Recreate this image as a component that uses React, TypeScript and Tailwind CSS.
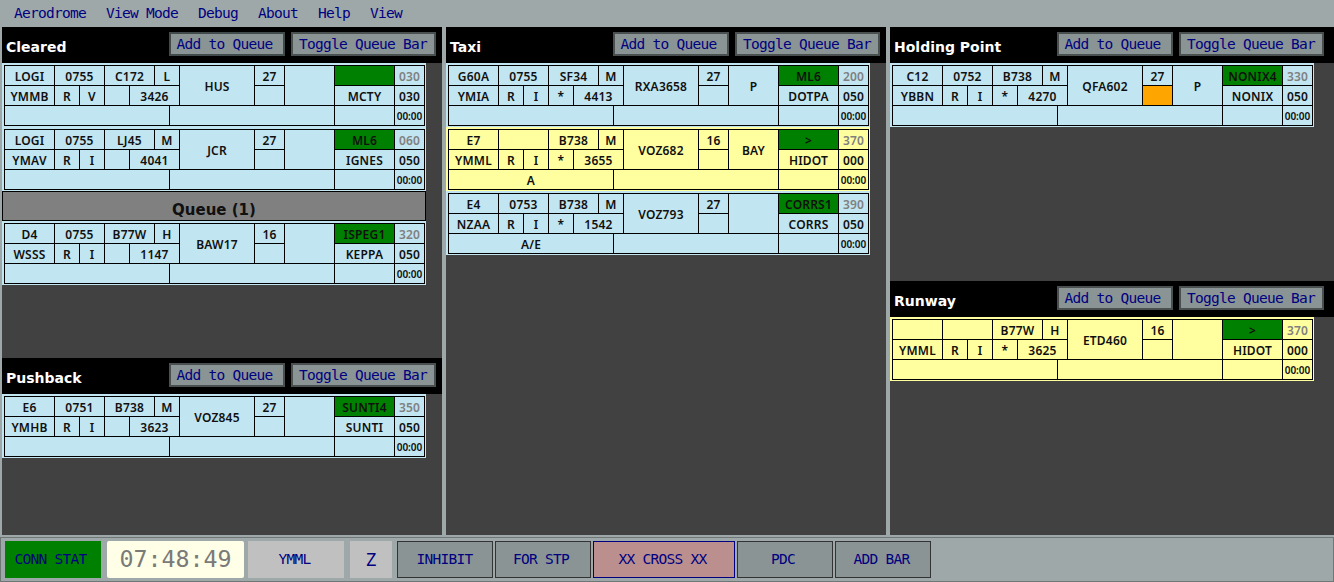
import React from 'react';

const MONO = "font-['DejaVu_Sans_Mono',monospace] text-[14.5px] tracking-[-0.73px]";

interface StripData {
  bay?: string;
  time?: string;
  type: string;
  wake: string;
  call: string;
  rwy: string;
  stand?: string;
  sid?: string;
  rfl: string;
  dep: string;
  flight: string;
  star?: string;
  squawk: string;
  hold?: boolean;
  fix: string;
  cfl: string;
  route?: string;
  yellow?: boolean;
}

const CELL = 'flex items-center justify-center border-r border-b border-black pt-[2px] whitespace-nowrap overflow-hidden';

function Strip({ s }: { s: StripData }) {
  return (
    <div className={`w-[424px] pt-[2px] pl-[2px] h-[64px] ${s.yellow ? 'bg-[#ffff9f]' : 'bg-[#c1e5f1]'}`}>
      <div className="grid w-[421px] grid-cols-[50px_25px_25px_25px_25px_15px_10px_75px_30px_50px_60px_30px] grid-rows-[20px_20px_20px] border-l border-t border-black font-['Noto_Sans',sans-serif] text-[12px] font-semibold tracking-[0.2px] text-[#101010]">
        <div className={CELL}>{s.bay}</div>
        <div className={`${CELL} col-span-2`}>{s.time}</div>
        <div className={`${CELL} col-span-2`}>{s.type}</div>
        <div className={`${CELL} col-span-2`}>{s.wake}</div>
        <div className={`${CELL} row-span-2`}>{s.call}</div>
        <div className={CELL}>{s.rwy}</div>
        <div className={`${CELL} row-span-2`}>{s.stand}</div>
        <div className={`${CELL} bg-[#008000]`}>{s.sid}</div>
        <div className={`${CELL} text-[#808080]`}>{s.rfl}</div>

        <div className={CELL}>{s.dep}</div>
        <div className={CELL}>R</div>
        <div className={CELL}>{s.flight}</div>
        <div className={CELL}>{s.star}</div>
        <div className={`${CELL} col-span-3`}>{s.squawk}</div>
        <div className={`${CELL} ${s.hold ? 'bg-[#ffa500]' : ''}`} />
        <div className={CELL}>{s.fix}</div>
        <div className={CELL}>{s.cfl}</div>

        <div className={`${CELL} col-span-6`}>{s.route}</div>
        <div className={`${CELL} col-span-4`} />
        <div className={CELL} />
        <div className={`${CELL} text-[10px] tracking-normal`}>00:00</div>
      </div>
    </div>
  );
}

function Header({ title, focused, extra }: { title: string; focused?: boolean; extra?: boolean }) {
  const btn = `h-[24px] border-2 bg-[#8a9494] pb-[2px] text-[#000080] ${MONO}`;
  return (
    <div className={`flex h-[36px] items-center bg-black ${extra ? 'pr-[10px]' : 'pr-[6px]'}`}>
      <span className="pl-[4px] pt-[4px] font-['DejaVu_Sans',sans-serif] text-[14px] font-bold text-white">{title}</span>
      <div className="ml-auto flex gap-[6px] pb-[3px]">
        <button className={`${btn} w-[116px] pr-[5px] ${focused ? 'border-[#404a4a]' : 'border-[#4a4f4f]'}`}>Add to Queue</button>
        <button className={`${btn} w-[145px] pr-[1px] border-[#4a4f4f]`}>Toggle Queue Bar</button>
      </div>
    </div>
  );
}

const CLEARED: StripData[] = [
  { bay: 'LOGI', time: '0755', type: 'C172', wake: 'L', call: 'HUS', rwy: '27', rfl: '030', dep: 'YMMB', flight: 'V', squawk: '3426', fix: 'MCTY', cfl: '030' },
  { bay: 'LOGI', time: '0755', type: 'LJ45', wake: 'M', call: 'JCR', rwy: '27', sid: 'ML6', rfl: '060', dep: 'YMAV', flight: 'I', squawk: '4041', fix: 'IGNES', cfl: '050' },
];
const QUEUE: StripData[] = [
  { bay: 'D4', time: '0755', type: 'B77W', wake: 'H', call: 'BAW17', rwy: '16', sid: 'ISPEG1', rfl: '320', dep: 'WSSS', flight: 'I', squawk: '1147', fix: 'KEPPA', cfl: '050' },
];
const PUSHBACK: StripData[] = [
  { bay: 'E6', time: '0751', type: 'B738', wake: 'M', call: 'VOZ845', rwy: '27', sid: 'SUNTI4', rfl: '350', dep: 'YMHB', flight: 'I', squawk: '3623', fix: 'SUNTI', cfl: '050' },
];
const TAXI: StripData[] = [
  { bay: 'G60A', time: '0755', type: 'SF34', wake: 'M', call: 'RXA3658', rwy: '27', stand: 'P', sid: 'ML6', rfl: '200', dep: 'YMIA', flight: 'I', star: '*', squawk: '4413', fix: 'DOTPA', cfl: '050' },
  { bay: 'E7', type: 'B738', wake: 'M', call: 'VOZ682', rwy: '16', stand: 'BAY', sid: '>', rfl: '370', dep: 'YMML', flight: 'I', star: '*', squawk: '3655', fix: 'HIDOT', cfl: '000', route: 'A', yellow: true },
  { bay: 'E4', time: '0753', type: 'B738', wake: 'M', call: 'VOZ793', rwy: '27', sid: 'CORRS1', rfl: '390', dep: 'NZAA', flight: 'I', star: '*', squawk: '1542', fix: 'CORRS', cfl: '050', route: 'A/E' },
];
const HOLDING: StripData[] = [
  { bay: 'C12', time: '0752', type: 'B738', wake: 'M', call: 'QFA602', rwy: '27', stand: 'P', sid: 'NONIX4', rfl: '330', dep: 'YBBN', flight: 'I', star: '*', squawk: '4270', fix: 'NONIX', cfl: '050', hold: true },
];
const RUNWAY: StripData[] = [
  { type: 'B77W', wake: 'H', call: 'ETD460', rwy: '16', sid: '>', rfl: '370', dep: 'YMML', flight: 'I', star: '*', squawk: '3625', fix: 'HIDOT', cfl: '000', yellow: true },
];

const FOOT_BTN = `flex h-[37px] items-center justify-center border text-[#000080] ${MONO}`;

export default function App() {
  return (
    <div className="flex h-[582px] w-[1334px] flex-col overflow-hidden bg-[#9fa8a8]">
      {/* Menu */}
      <div className={`flex h-[27px] items-center gap-[20px] pl-[14px] text-[#000080] ${MONO}`}>
        <span>Aerodrome</span>
        <span>View Mode</span>
        <span>Debug</span>
        <span>About</span>
        <span>Help</span>
        <span>View</span>
      </div>

      {/* Columns */}
      <div className="flex h-[508px] gap-[4px] pl-[2px]">
        <div className="w-[440px] bg-[#414141]">
          <div className="h-[331px]">
            <Header title="Cleared" focused />
            {CLEARED.map((s) => <Strip key={s.call} s={s} />)}
            <div className="flex h-[30px] w-[424px] items-center justify-center border border-black bg-[#808080] pt-[8px] font-['DejaVu_Sans',sans-serif] text-[15px] font-bold text-[#101010]">
              Queue (1)
            </div>
            {QUEUE.map((s) => <Strip key={s.call} s={s} />)}
          </div>
          <Header title="Pushback" />
          {PUSHBACK.map((s) => <Strip key={s.call} s={s} />)}
        </div>

        <div className="w-[440px] bg-[#414141]">
          <Header title="Taxi" />
          {TAXI.map((s) => <Strip key={s.call} s={s} />)}
        </div>

        <div className="w-[444px] bg-[#414141]">
          <div className="h-[254px]">
            <Header title="Holding Point" extra />
            {HOLDING.map((s) => <Strip key={s.call} s={s} />)}
          </div>
          <Header title="Runway" extra />
          {RUNWAY.map((s) => <Strip key={s.call} s={s} />)}
        </div>
      </div>

      {/* Bottom bar */}
      <div className="mt-[2px] flex flex-1 items-start border border-[#6f7676] pl-[4px] pt-[3px]">
        <div className={`${FOOT_BTN} w-[96px] border-[#008000] bg-[#008000] pr-[5px]`}>CONN STAT</div>
        <div className="ml-[6px] flex h-[37px] w-[137px] items-center justify-center rounded-[2px] bg-[#ffffe8] font-['DejaVu_Sans_Mono',monospace] text-[23.3px] text-[#7a7a78]">07:48:49</div>
        <div className={`${FOOT_BTN} ml-[4px] w-[96px] border-[#c0c0c0] bg-[#c0c0c0] pr-[3px]`}>YMML</div>
        <div className="ml-[6px] flex h-[37px] w-[42px] items-center justify-center bg-[#c0c0c0] font-['DejaVu_Sans_Mono',monospace] text-[18px] text-[#000080]">Z</div>
        <div className={`${FOOT_BTN} ml-[5px] w-[96px] border-[#333] bg-[#8a9494] pr-[1px]`}>INHIBIT</div>
        <div className={`${FOOT_BTN} ml-[2px] w-[96px] border-[#333] bg-[#8a9494] pr-[4px]`}>FOR STP</div>
        <div className={`${FOOT_BTN} ml-[2px] w-[142px] border-[#000080] bg-[#bc8f8f] pr-[3px]`}>XX CROSS XX</div>
        <div className={`${FOOT_BTN} ml-[2px] w-[96px] border-[#333] bg-[#8a9494] pr-[4px]`}>PDC</div>
        <div className={`${FOOT_BTN} ml-[2px] w-[96px] border-[#333] bg-[#8a9494] pr-[3px]`}>ADD BAR</div>
      </div>
    </div>
  );
}
